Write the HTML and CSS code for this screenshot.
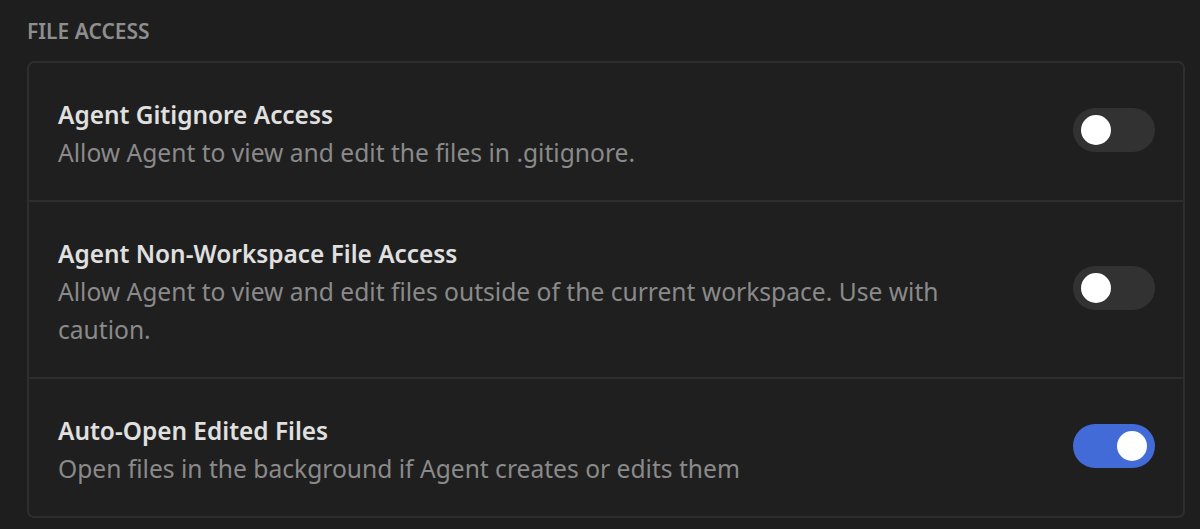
FILE: index.html
```html
<!DOCTYPE html>
<html lang="en">
<head>
<meta charset="utf-8">
<title>File Access</title>
<link rel="stylesheet" href="styles.css">
</head>
<body>
<section class="section">
  <h2 class="section-title">FILE ACCESS</h2>
  <div class="card">
    <div class="row">
      <div class="text">
        <div class="title">Agent Gitignore Access</div>
        <div class="desc">Allow Agent to view and edit the files in .gitignore.</div>
      </div>
      <div class="toggle"><span class="knob"></span></div>
    </div>
    <div class="row">
      <div class="text">
        <div class="title">Agent Non-Workspace File Access</div>
        <div class="desc">Allow Agent to view and edit files outside of the current workspace. Use with caution.</div>
      </div>
      <div class="toggle"><span class="knob"></span></div>
    </div>
    <div class="row">
      <div class="text">
        <div class="title">Auto-Open Edited Files</div>
        <div class="desc">Open files in the background if Agent creates or edits them</div>
      </div>
      <div class="toggle on"><span class="knob"></span></div>
    </div>
  </div>
</section>
</body>
</html>
```
FILE: styles.css
```css
html, body {
  margin: 0;
  padding: 0;
  background: #1e1e1e;
}
body {
  font-family: "Noto Sans", "Open Sans", sans-serif;
  color: #e2e2e2;
}
.section {
  padding: 15px 15px 0 27px;
}
.section-title {
  margin: 0;
  font-size: 21px;
  font-weight: 600;
  line-height: 32px;
  color: #8e8e8e;
}
.card {
  margin-top: 14px;
  border: 2px solid #2e2e2e;
  border-radius: 7px;
  background: #1f1f1f;
}
.row {
  display: flex;
  align-items: center;
  padding: 31px 28px 28px 29px;
  border-top: 2px solid #2e2e2e;
}
.row:first-child {
  border-top: none;
}
.text {
  flex: 1;
  max-width: 920px;
  padding-top: 2px;
}
.title {
  font-size: 24.4px;
  font-weight: 600;
  line-height: 38px;
  color: #e0e0e0;
}
.desc {
  font-size: 24.6px;
  line-height: 38px;
  color: #8a8a8a;
}
.toggle {
  margin-left: auto;
  margin-bottom: 6px;
  width: 82px;
  height: 44px;
  border-radius: 22px;
  background: #323232;
  display: flex;
  align-items: center;
  padding: 0 8px;
  box-sizing: border-box;
  flex-shrink: 0;
}
.knob {
  width: 30px;
  height: 30px;
  border-radius: 50%;
  background: #ffffff;
}
.toggle.on {
  background: #426bd8;
  justify-content: flex-end;
}
```
